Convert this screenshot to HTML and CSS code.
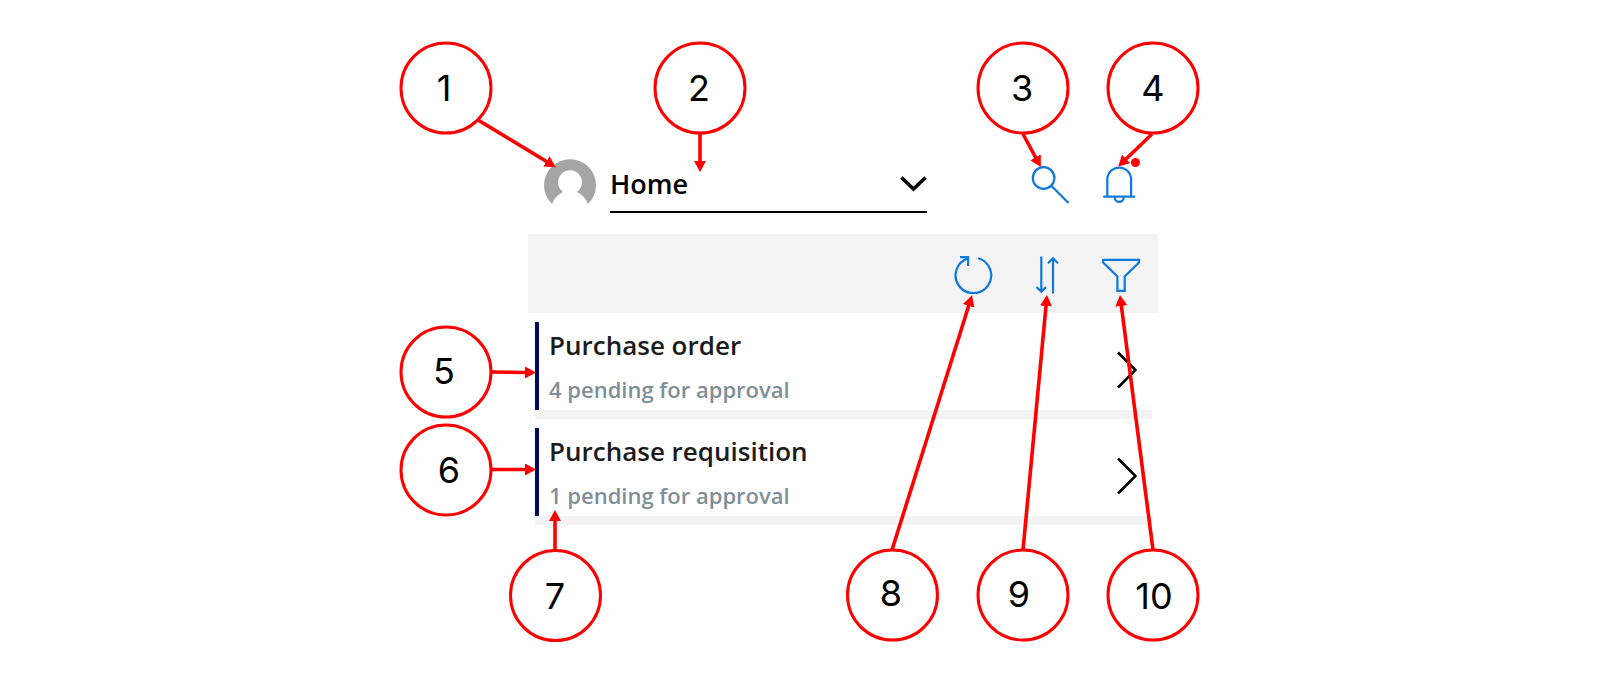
FILE: index.html
```html
<!DOCTYPE html>
<html lang="en">
<head>
<meta charset="utf-8">
<meta name="viewport" content="width=device-width, initial-scale=1">
<title>Approvals home</title>
<link rel="stylesheet" href="styles.css">
</head>
<body>
<main class="stage">
  <section class="app">
    <header class="app-header">
      <svg class="avatar" viewBox="0 0 52 46" role="img" aria-label="Profile">
        <path d="M8 46 A26 26 0 1 1 44 46 A22 22 0 0 0 33 34 A12 12 0 1 0 19 34 A22 22 0 0 0 8 46 Z" fill="#a5a5a5"/>
      </svg>
      <div class="picker">
        <select class="picker-select" aria-label="Page">
          <option>Home</option>
        </select>
        <svg class="picker-arrow" viewBox="0 0 27 17" aria-hidden="true"><path d="M1.5 1.5 L13.5 13 L25.5 1.5"/></svg>
      </div>
      <div class="header-actions">
        <button class="icon-button" type="button" aria-label="Search">
          <svg class="icon" viewBox="0 0 40 40"><circle cx="13.6" cy="14" r="10.8"/><path d="M21.3 21.8 L38.5 39"/></svg>
        </button>
        <button class="icon-button" type="button" aria-label="Notifications">
          <svg class="icon" viewBox="0 0 40 40"><path d="M7.3 32.3 V15.5 A11.9 11.9 0 0 1 31.1 15.5 V32.3 M3.2 32.6 H35 M14.8 33.5 A4.4 4.4 0 0 0 23.6 33.5"/></svg>
          <span class="badge"></span>
        </button>
      </div>
    </header>

    <div class="toolbar">
      <button class="icon-button" type="button" aria-label="Refresh">
        <svg class="icon" viewBox="0 0 40 40"><path d="M15 4.4 A17.8 17.8 0 1 0 25.2 4.2 M7 3.2 H15.1 V12"/></svg>
      </button>
      <button class="icon-button" type="button" aria-label="Sort">
        <svg class="icon" viewBox="0 0 40 40"><path d="M14.3 2.5 V37.5 M9.5 33 L14.3 37.8 L19 33 M26 39.5 V4.5 M21 9.2 L26 4.2 L31 9.2"/></svg>
      </button>
      <button class="icon-button" type="button" aria-label="Filter">
        <svg class="icon" viewBox="0 0 40 40"><path d="M2.2 5.8 H38 V8.6 L23.7 22.5 V36.8 H16.4 V22.5 L2.2 8.6 Z"/></svg>
      </button>
    </div>

    <ul class="list">
      <li class="list-row">
        <a class="list-link" href="#purchase-order">
          <span class="list-text">
            <span class="list-title">Purchase order</span>
            <span class="list-note">4 pending for approval</span>
          </span>
          <svg class="chevron" viewBox="0 0 20 38" aria-hidden="true"><path d="M1 1.5 L18.5 19 L1 36.5"/></svg>
        </a>
      </li>
      <li class="list-row">
        <a class="list-link" href="#purchase-requisition">
          <span class="list-text">
            <span class="list-title">Purchase requisition</span>
            <span class="list-note">1 pending for approval</span>
          </span>
          <svg class="chevron" viewBox="0 0 20 38" aria-hidden="true"><path d="M1 1.5 L18.5 19 L1 36.5"/></svg>
        </a>
      </li>
    </ul>
  </section>

  <svg class="callouts" viewBox="400 0 800 693">
    <defs>
      <marker id="head" markerUnits="userSpaceOnUse" markerWidth="11" markerHeight="12" refX="3" refY="6" orient="auto">
        <path d="M0 0 L11 6 L0 12 Z" fill="#ff0000"/>
      </marker>
    </defs>
    <g class="callout-rings">
      <circle cx="446" cy="88" r="45"/>
      <circle cx="700" cy="88" r="45"/>
      <circle cx="1023" cy="88" r="45"/>
      <circle cx="1153" cy="88" r="45"/>
      <circle cx="446" cy="372" r="45"/>
      <circle cx="446" cy="470" r="45"/>
      <circle cx="555.5" cy="595.5" r="45"/>
      <circle cx="892.5" cy="595" r="45"/>
      <circle cx="1023" cy="595" r="45"/>
      <circle cx="1153" cy="595" r="45"/>
    </g>
    <g class="callout-arrows">
      <path d="M478 120 L549 163"/>
      <path d="M700 134 L700 164"/>
      <path d="M1023 134 L1037 160"/>
      <path d="M1152 134 L1124 161"/>
      <path d="M492 372 L528 372.5"/>
      <path d="M492 469.5 L528 469.5"/>
      <path d="M555 550 L555 518"/>
      <path d="M892 550 L969.6 303"/>
      <path d="M1023 550 L1046.3 303"/>
      <path d="M1153 550 L1121 303"/>
    </g>
    <g class="callout-numbers">
      <text x="444" y="101">1</text>
      <text x="699" y="101">2</text>
      <text x="1022" y="101">3</text>
      <text x="1153" y="101">4</text>
      <text x="444" y="384">5</text>
      <text x="449" y="483">6</text>
      <text x="555" y="609">7</text>
      <text x="891" y="606">8</text>
      <text x="1019" y="607">9</text>
      <text x="1154" y="609">10</text>
    </g>
  </svg>
</main>
</body>
</html>
```
FILE: styles.css
```css
* {
  box-sizing: border-box;
}

body {
  margin: 0;
  background: #ffffff;
  color: #000000;
  font-family: "Open Sans", "Noto Sans", sans-serif;
}

.stage {
  position: relative;
  max-width: 800px;
  margin: 0 auto;
  padding: 158px 42px 168px 128px;
}

.app-header {
  display: flex;
  align-items: flex-start;
  height: 76px;
  padding: 0 18px 0 16px;
}

.avatar {
  width: 52px;
  height: 46px;
  flex: none;
}

.picker {
  position: relative;
  flex: 1;
  margin: 0 103px 0 14px;
}

.picker-select {
  display: block;
  width: 100%;
  height: 55px;
  padding: 0 0 2px;
  border: 0;
  border-bottom: 2px solid #000000;
  border-radius: 0;
  appearance: none;
  background: transparent;
  color: #000000;
  font: 600 27px/40px "Open Sans", "Noto Sans", sans-serif;
}

.picker-arrow {
  position: absolute;
  right: 0;
  top: 18px;
  width: 27px;
  height: 17px;
  fill: none;
  stroke: #000000;
  stroke-width: 3.5;
  pointer-events: none;
}

.header-actions {
  display: flex;
  gap: 30px;
  padding-top: 6px;
}

.icon-button {
  position: relative;
  width: 40px;
  height: 40px;
  padding: 0;
  border: 0;
  background: transparent;
}

.icon {
  display: block;
  width: 40px;
  height: 40px;
  fill: none;
  stroke: #0f78dc;
  stroke-width: 2.2;
}

.badge {
  position: absolute;
  top: -6px;
  right: 0;
  width: 9px;
  height: 9px;
  border-radius: 50%;
  background: #ff0000;
}

.toolbar {
  display: flex;
  justify-content: flex-end;
  align-items: center;
  gap: 34px;
  height: 79px;
  padding: 1px 17px 0 0;
  background: #f3f3f3;
}

.list {
  margin: 0;
  padding: 0 6px 0 7px;
  list-style: none;
}

.list-row {
  padding-top: 9px;
  border-bottom: 9px solid #f3f3f3;
}

.list-link {
  display: flex;
  align-items: center;
  justify-content: space-between;
  height: 88px;
  padding: 2px 15px 0 10px;
  border-left: 4px solid #00085f;
  color: #1b1b1b;
  text-decoration: none;
}

.list-text {
  display: flex;
  flex-direction: column;
}

.list-title {
  font-size: 26px;
  font-weight: 600;
  line-height: 44px;
}

.list-note {
  color: #7f8f96;
  font-size: 22px;
  font-weight: 600;
  line-height: 44px;
}

.chevron {
  width: 20px;
  height: 38px;
  margin-top: 6px;
  fill: none;
  stroke: #000000;
  stroke-width: 2.5;
}

.callouts {
  position: absolute;
  top: 0;
  left: 0;
  width: 100%;
  overflow: visible;
  pointer-events: none;
}

.callout-rings {
  fill: #ffffff;
  stroke: #ff0000;
  stroke-width: 3;
}

.callout-arrows {
  fill: none;
  stroke: #ff0000;
  stroke-width: 3.6;
}

.callout-arrows path {
  marker-end: url(#head);
}

.callout-numbers {
  fill: #000000;
  font-family: Inter, "Liberation Sans", sans-serif;
  font-size: 36px;
  text-anchor: middle;
}
```
